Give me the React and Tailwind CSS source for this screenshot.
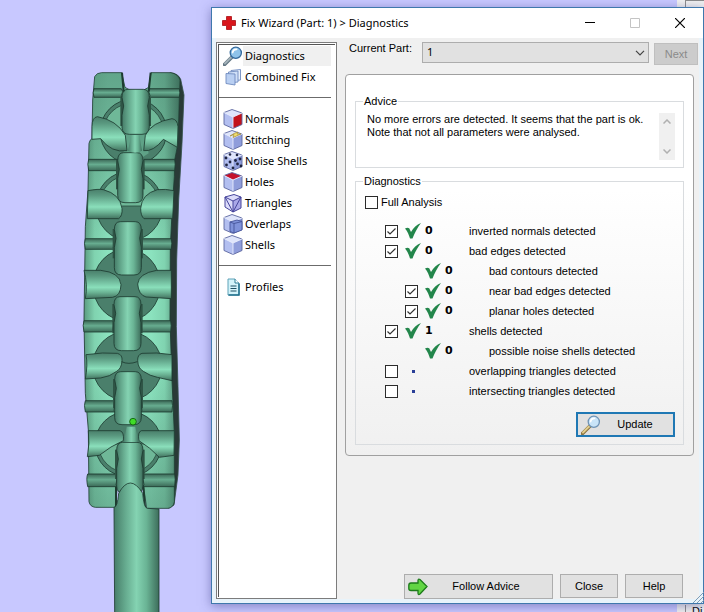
import React, { useState } from "react";

const menuGroups = [
  [
    { name: "Diagnostics", icon: "search" },
    { name: "Combined Fix", icon: "stack" },
  ],
  [
    { name: "Normals", icon: "normals" },
    { name: "Stitching", icon: "stitching" },
    { name: "Noise Shells", icon: "noise" },
    { name: "Holes", icon: "holes" },
    { name: "Triangles", icon: "triangles" },
    { name: "Overlaps", icon: "overlaps" },
    { name: "Shells", icon: "shells" },
  ],
  [{ name: "Profiles", icon: "profiles" }],
];

const checks = [
  { id: "normals", label: "inverted normals detected", count: 0, box: true, on: true },
  { id: "edges", label: "bad edges detected", count: 0, box: true, on: true },
  { id: "contours", label: "bad contours detected", count: 0, nested: true },
  { id: "near", label: "near bad edges detected", count: 0, nested: true, box: true, on: true },
  { id: "planar", label: "planar holes detected", count: 0, nested: true, box: true, on: true },
  { id: "shells", label: "shells detected", count: 1, box: true, on: true },
  { id: "noise", label: "possible noise shells detected", count: 0, nested: true },
  { id: "overlapping", label: "overlapping triangles detected", box: true, on: false },
  { id: "intersecting", label: "intersecting triangles detected", box: true, on: false },
];

const Magnifier = ({ gold }) => (
  <svg viewBox="0 0 20 20" className="size-5 shrink-0" aria-hidden="true">
    <path d="M1.5 18.5 8.5 11.5" stroke={gold ? "#8a7440" : "#5f7380"} strokeWidth="3.6" strokeLinecap="round" />
    <path d="M2 17.5 8 11.5" stroke={gold ? "#e2cd8d" : "#a3b1b9"} strokeWidth="2" strokeLinecap="round" />
    <circle cx="12.8" cy="6.8" r="5.6" fill={gold ? "#c9e4f8" : "#8fc3ea"} stroke={gold ? "#6f93b5" : "#33689b"} strokeWidth="1.3" />
    <path d="M9.6 6.6C9.8 4.6 11.4 3.2 13.6 3.4" stroke="#fff" strokeWidth="1.6" fill="none" strokeLinecap="round" />
  </svg>
);

const Cube = ({ top = "#dfe5fb", right = "#8f9ddb", children }) => (
  <svg viewBox="0 0 20 20" className="size-5 shrink-0" aria-hidden="true">
    <path d="M1 3.5 9 0.5 19 4 10 8Z" fill={top} />
    <path d="M1 3.5 10 8V19.5L1 15.5Z" fill="#b3bff0" />
    <path d="M10 8 19 4V15.5L10 19.5Z" fill={right} />
    <path d="M1 3.5 9 0.5 19 4V15.5L10 19.5 1 15.5Z" fill="none" stroke="#5c679f" strokeWidth="0.9" />
    <path d="M1 3.5 10 8 19 4M10 8V19.5" fill="none" stroke="#e8ecfd" strokeWidth="0.9" />
    {children}
  </svg>
);

const MenuIcon = ({ icon }) => {
  switch (icon) {
    case "search":
      return <Magnifier />;
    case "stack":
      return (
        <svg viewBox="0 0 20 20" className="size-5 shrink-0" aria-hidden="true">
          <g stroke="#6f8bc0" strokeWidth="0.9">
            <path d="M8 3.5 17.500 2.500V13L8 14Z" fill="#e6effc" />
            <path d="M5.500 5 15 4V15L5.500 16Z" fill="#cfdff7" />
            <path d="M3 6.500 12 7V18L3 16.500Z" fill="#b9cff2" />
          </g>
        </svg>
      );
    case "normals":
      return <Cube right="#c2131b" />;
    case "holes":
      return <Cube top="#c4122c" />;
    case "stitching":
      return (
        <Cube>
          <path d="M7 6 11 4.500 10 7.500 18 4 14 4 15 2 11 3.500Z" fill="#f3df6d" stroke="#a08a32" strokeWidth="0.7" />
        </Cube>
      );
    case "noise":
      return (
        <Cube>
          <g fill="#1f2440">
            <circle cx="3" cy="7" r="1.4" />
            <circle cx="7" cy="11" r="1.4" />
            <circle cx="3.5" cy="14" r="1.4" />
            <circle cx="7" cy="3.5" r="1.3" />
            <circle cx="14" cy="4" r="1.3" />
            <circle cx="12.5" cy="9.5" r="1.4" />
            <circle cx="17" cy="8" r="1.4" />
            <circle cx="14.5" cy="13" r="1.4" />
            <circle cx="10" cy="17" r="1.4" />
            <circle cx="18" cy="15" r="1.4" />
          </g>
        </Cube>
      );
    case "triangles":
      return (
        <svg viewBox="0 0 20 20" className="size-5 shrink-0" aria-hidden="true">
          <path d="M2 4 11 1.5 18 4V15L10 19 2 14Z" fill="#dcdcfa" />
          <path d="M10 8 18 4V15L10 19Z" fill="#a9a8e8" />
          <path d="M2 4 11 1.5 18 4V15L10 19 2 14ZM2 4 10 19 18 4M10 19V8M2 4 10 8 18 4" fill="none" stroke="#46459b" />
        </svg>
      );
    case "overlaps":
      return (
        <Cube>
          <path d="M7 8 14 6 19 7.500V16L11 19 7 17.500Z" fill="#7f92da" stroke="#46559b" strokeWidth="0.9" />
          <path d="M7 8 11 9.500 19 7.500M11 9.500V19" fill="none" stroke="#46559b" strokeWidth="0.9" />
        </Cube>
      );
    case "profiles":
      return (
        <svg viewBox="0 0 20 20" className="size-5 shrink-0" aria-hidden="true">
          <path d="M5 2H12L16 6V18H5Z" fill="#d3f3fa" stroke="#5fa3b8" />
          <path d="M12 2V6H16" fill="#fff" stroke="#2c7c95" />
          <path d="M16 6.500V18H5.500" fill="none" stroke="#1f6f8c" strokeWidth="1.500" />
          <path d="M7.500 9H13.500M7.500 11.500H13.500M7.500 14H13.500" stroke="#1e4f63" />
        </svg>
      );
    default:
      return <Cube />;
  }
};

const GreenTick = () => (
  <svg viewBox="0 0 16 16" className="size-4 shrink-0" aria-hidden="true">
    <path d="M0 5.500Q2.500 4 4.200 5.200L6 9C8.500 4.500 11.500 1.500 16 0 12.500 4.500 9.500 10 7.500 15.500H5C4 12 2.500 8.500 0 5.500Z" fill="#23864b" />
  </svg>
);

const CheckBox = ({ id, checked, onChange }) => (
  <span className="grid size-[13px] shrink-0">
    <input
      id={id}
      type="checkbox"
      checked={checked}
      onChange={onChange}
      className="col-start-1 row-start-1 size-[13px] appearance-none border border-[#2b2b2b] bg-white"
    />
    {checked && (
      <svg viewBox="0 0 13 13" className="pointer-events-none col-start-1 row-start-1 size-[13px]" aria-hidden="true">
        <path d="M2.500 6.500 5 9 10.500 3.500" fill="none" stroke="#333" strokeWidth="1.200" />
      </svg>
    )}
  </span>
);

// Outlines of the side rollers, left and right of the centre line
const rollers = [
  "M66 200Q66 172 82 170Q140 180 166 226L171 272Q125 280 92 236L66 238Z",
  "M324 200Q322 178 306 176Q245 186 226 226L221 272Q250 276 280 238L322 262Z",
  "M54 392Q85 386 100 389Q150 402 156 445Q158 468 146 476H52Z",
  "M312 392Q285 386 262 389Q215 402 212 445Q212 468 222 476H308Z",
  "M42 631H92Q150 637 153 674Q152 708 128 712L46 716Q54 675 42 631Z",
  "M304 631H260Q206 640 203 672Q206 705 228 711L304 716Z",
  "M48 884Q100 876 142 880Q158 884 156 902Q155 925 140 934Q120 950 92 954L46 957Q54 915 48 884Z",
  "M306 884Q260 876 216 880Q202 884 203 902Q204 925 220 934Q240 948 262 952L306 962Z",
  "M55 1112H150Q163 1116 160 1142Q122 1158 88 1186L52 1190Q60 1150 55 1112Z",
  "M313 1112H214Q202 1116 207 1142Q240 1162 268 1192L312 1186Z",
];

const ridges = [
  [86, 112, 72, 158, 236, 328],
  [298, 332, 56, 146, 218, 314],
  [536, 568, 46, 134, 212, 304],
  [782, 816, 42, 132, 212, 302],
  [1022, 1056, 46, 136, 212, 306],
  [1242, 1280, 53, 142, 218, 314],
];

// Central posts: [top, bottom, left, right]
const posts = [
  [88, 223, 156, 238],
  [278, 428, 143, 219],
  [485, 645, 133, 214],
  [710, 872, 132, 213],
  [935, 1094, 134, 214],
  [1147, 1300, 140, 219],
];

const discs = [
  { cx: 190, cy: 215, rx: 100, ry: 98, wedge: 0 },
  { cx: 178, cy: 438, rx: 100, ry: 104, wedge: 0 },
  { cx: 170, cy: 675, rx: 101, ry: 108 },
  { cx: 172, cy: 918, rx: 104, ry: 104 },
  { cx: 175, cy: 1152, rx: 100, ry: 98, wedge: 1 },
];

const faceOutline =
  "M74 50Q80 38 95 38H155L165 82Q200 108 236 82L243 38H302Q325 42 330 60L328 110 324 250 314 300 313 350 308 420 301 560 300 780 306 960 313 1120 313 1325Q310 1343 294 1345H230L220 1275H142L137 1342H76Q60 1340 57 1325L55 1110 46 1000 42 780 46 500 54 390 57 250Q60 238 66 236L68 120Z";

const PartModel = () => (
  <svg viewBox="0 0 211 612" preserveAspectRatio="xMinYMin slice" className="h-full w-[211px]" role="img" aria-label="3D part">
    <defs>
      <linearGradient id="roller" x1="0" y1="0" x2="0" y2="1">
        <stop offset="0" stopColor="#4a7f6b" />
        <stop offset="0.200" stopColor="#5a9980" />
        <stop offset="0.600" stopColor="#8adfbb" />
        <stop offset="0.780" stopColor="#6bb394" />
        <stop offset="1" stopColor="#42725f" />
      </linearGradient>
      <linearGradient id="post">
        <stop offset="0" stopColor="#467c68" />
        <stop offset="0.250" stopColor="#65aa8e" />
        <stop offset="0.500" stopColor="#84d3b2" />
        <stop offset="0.720" stopColor="#6ab495" />
        <stop offset="1" stopColor="#3d6d5b" />
      </linearGradient>
      <linearGradient id="face">
        <stop offset="0" stopColor="#5b9b81" />
        <stop offset="0.110" stopColor="#80d3b0" />
        <stop offset="0.250" stopColor="#8be2be" />
        <stop offset="0.700" stopColor="#8be2be" />
        <stop offset="0.840" stopColor="#80d3b0" />
        <stop offset="1" stopColor="#4b806c" />
      </linearGradient>
      <linearGradient id="ridge" x1="0" y1="0" x2="0" y2="1">
        <stop offset="0" stopColor="#3b6756" />
        <stop offset="0.450" stopColor="#67ad90" />
        <stop offset="1" stopColor="#3b6957" />
      </linearGradient>
      <linearGradient id="ends" x1="0" y1="0" x2="0" y2="1">
        <stop offset="0" stopColor="#2f5c4b" stopOpacity="0.450" />
        <stop offset="0.200" stopColor="#2f5c4b" stopOpacity="0.280" />
        <stop offset="0.400" stopColor="#2f5c4b" stopOpacity="0" />
        <stop offset="0.700" stopColor="#2f5c4b" stopOpacity="0" />
        <stop offset="1" stopColor="#2f5c4b" stopOpacity="0.350" />
      </linearGradient>
    </defs>
    <g transform="translate(70 60) scale(0.33333)" stroke="#1d3b30" strokeWidth="2.500" strokeLinejoin="round">
      <path d="M300 38Q325 40 332 58L342 105 336 250 326 420 320 600 319 800 324 980 328 1140 324 1245 312 1335 296 1345Z" fill="#293a37" stroke="#35504a" />
      <path d={faceOutline} fill="url(#face)" />
      <path d={faceOutline} fill="url(#ends)" stroke="none" />
      {discs.map(({ cx, cy, rx, ry, wedge }) => (
        <g key={cy}>
          <ellipse cx={cx} cy={cy} rx={rx} ry={ry} fill="#4a7f6b" />
          {wedge !== undefined && (
            <path d={`M${cx - rx + 10} ${cy}A${rx - 10} ${ry - 12} 0 0 ${wedge ? 0 : 1} ${cx + rx - 10} ${cy}Z`} fill="#6fb898" strokeWidth="2" />
          )}
        </g>
      ))}
      <path d="M168 212H224L236 280 205 300 160 285Z" fill="#5fa287" stroke="none" />
      {ridges.map(([t, b, l, il, ir, r]) => (
        <g key={t} fill="url(#ridge)">
          <path d={`M${l} ${t}H${il - 4}L${il} ${t + 8} ${il - 4} ${b - 5} ${il} ${b}H${l}Q${l - 5} ${t + 12} ${l} ${t}Z`} />
          <path d={`M${r} ${t}H${ir + 4}L${ir} ${t + 8} ${ir + 4} ${b - 5} ${ir} ${b}H${r}Q${r + 3} ${t + 12} ${r} ${t}Z`} />
        </g>
      ))}
      {/* Shadow gaps on both sides of every post */}
      {posts.map(([t, b, l, r]) => (
        <path key={t} d={`M${l - 5} ${t + 22}H${r + 5}V${t + 110}H${l - 5}Z`} fill="#2f5546" stroke="none" />
      ))}
      {posts.map(([t, b, l, r]) => (
        <path
          key={t}
          d={`M${l + 18} ${t}H${r - 18}Q${r} ${t} ${r} ${t + 24}L${r - 5} ${t + 50} ${r} ${t + 78}V${b - 22}Q${r} ${b} ${r - 22} ${b}H${l + 22}Q${l} ${b} ${l} ${b - 22}V${t + 78}L${l + 5} ${t + 50} ${l} ${t + 24}Q${l} ${t} ${l + 18} ${t}Z`}
          fill="url(#post)"
        />
      ))}
      {rollers.map((d) => (
        <path key={d} d={d} fill="url(#roller)" />
      ))}
      <path d="M184 225H208L216 272Q196 284 174 272Z" fill="url(#post)" stroke="none" />
      <path d="M170 1100H196L206 1146H161Z" fill="url(#post)" stroke="none" />
      <path d="M155 905Q175 915 202 905" fill="none" />
      <path d="M156 38 161 95M242 38 236 95M138 1280V1342M220 1280 225 1342" strokeWidth="6" />
      <path d="M132 1342Q142 1342 146 1300Q180 1238 218 1300Q222 1345 232 1345L267 1347V1660H134Z" fill="url(#post)" />
      <circle cx="189" cy="1085" r="10" fill="#3fdc28" stroke="#0c5a0c" />
    </g>
  </svg>
);

const WizardButton = ({ className, children, ...rest }) => (
  <button
    type="button"
    className={`flex items-center justify-center bg-[#e1e1e1] text-black ${className}`}
    {...rest}
  >
    {children}
  </button>
);

const TitleBar = () => (
  <header className="flex h-[30px] items-center bg-white pl-[9px]">
    <svg viewBox="0 0 16 16" className="size-4" aria-hidden="true">
      <path d="M5.500 1.500H10.500V5.500H14.500V10.500H10.500V14.500H5.500V10.500H1.500V5.500H5.500Z" fill="#d9151b" stroke="#a90f14" strokeWidth="0.800" strokeLinejoin="round" />
    </svg>
    <h1 className="ml-1 flex-1 font-['Noto_Sans',sans-serif] text-black">Fix Wizard (Part: 1) &gt; Diagnostics</h1>
    <div className="flex">
      <button type="button" aria-label="Minimize" className="flex h-[30px] w-[45px] items-center justify-center">
        <svg viewBox="0 0 10 10" className="size-[10px]">
          <path d="M0 4.500H10" stroke="#000" />
        </svg>
      </button>
      <button type="button" aria-label="Maximize" disabled className="flex h-[30px] w-[45px] items-center justify-center">
        <svg viewBox="0 0 10 10" className="size-[10px]">
          <path d="M0.500 0.500H9.500V9.500H0.500Z" fill="none" stroke="#c4c4c4" />
        </svg>
      </button>
      <button type="button" aria-label="Close window" className="flex h-[30px] w-[46px] items-center justify-center">
        <svg viewBox="0 0 10 10" className="size-[10px]">
          <path d="M0 0 10 10M10 0 0 10" stroke="#000" strokeWidth="1.200" />
        </svg>
      </button>
    </div>
  </header>
);

const SideMenu = ({ active, onSelect }) => (
  <nav className="w-[121px] shrink-0 border border-[#7c7c7c] bg-white p-px">
    <div className="h-full border-t border-l border-[#555] pr-1">
      {menuGroups.map((group, i) => (
        <React.Fragment key={i}>
          {i > 0 && (
            <div className="flex h-[21px] items-center">
              <hr className="w-full border-[#6b6b6b]" />
            </div>
          )}
          {group.map((item) => (
            <button
              key={item.name}
              type="button"
              onClick={() => onSelect(item.name)}
              className="flex h-[21px] w-full items-center pl-1 text-left font-['Noto_Sans',sans-serif] text-black"
            >
              <MenuIcon icon={item.icon} />
              <span className={`flex-1 pl-[2px] leading-5 whitespace-nowrap ${active === item.name ? "bg-[#f0f0f0]" : ""}`}>
                {item.name}
              </span>
            </button>
          ))}
        </React.Fragment>
      ))}
    </div>
  </nav>
);

const App = () => {
  const [active, setActive] = useState("Diagnostics");
  const [full, setFull] = useState(false);
  const [enabled, setEnabled] = useState(() => Object.fromEntries(checks.map((c) => [c.id, !!c.on])));

  const toggle = (id) => setEnabled((prev) => ({ ...prev, [id]: !prev[id] }));

  return (
    <div className="grid min-h-screen overflow-hidden bg-[#c8c8ff] font-['Liberation_Sans',sans-serif] text-[11px] text-black">
      {/* Workspace behind the wizard */}
      <div className="col-start-1 row-start-1 flex justify-between">
        <PartModel />
        <div className="flex w-[27px] flex-col justify-between bg-[#f0f0f0] pl-2">
          <div className="h-5 border-t border-l border-[#8c8c8c]" />
          <div className="h-[7px] border-l border-[#8c8c8c] pl-[6px] leading-3">Di</div>
        </div>
      </div>

      {/* Wizard window */}
      <section className="col-start-1 row-start-1 mt-[7px] mb-2 ml-[211px] flex flex-col border border-[#3f78ad] bg-[#f0f0f0] shadow-[0_2px_10px_rgba(60,60,130,0.5)]">
        <TitleBar />
        <div className="flex flex-1 border-x-4 border-b-4 border-[#e8f3fa] pt-1">
          <SideMenu active={active} onSelect={setActive} />

          <main className="flex min-w-0 flex-1 flex-col pr-px pl-2">
            <div className="flex items-start pl-1">
              <label htmlFor="part" className="w-[73px] shrink-0 leading-3">
                Current Part:
              </label>
              <div className="grid flex-1">
                <select id="part" className="col-start-1 row-start-1 h-[21px] appearance-none border border-[#adadad] bg-[#e1e1e1] pl-1 font-['Noto_Sans',sans-serif]">
                  <option>1</option>
                </select>
                <svg viewBox="0 0 10 6" className="pointer-events-none col-start-1 row-start-1 mr-1 h-[6px] w-[10px] self-center justify-self-end" aria-hidden="true">
                  <path d="M1 0.800 5 4.800 9 0.800" fill="none" stroke="#444" strokeWidth="1.200" />
                </svg>
              </div>
              <button
                type="button"
                disabled
                className="mt-px ml-[5px] h-[22px] w-11 border border-[#bfbfbf] bg-[#cccccc] text-[#8a8a8a]"
              >
                Next
              </button>
            </div>

            <div className="mt-[9px] mr-1 rounded-[4px] border border-[#a0a0a0] bg-linear-to-b from-white from-30% to-[#f0f0f0] px-[9px] pt-[18px] pb-[10px]">
              <fieldset className="border border-[#d9dcdf] pr-2 pb-[7px] pl-[7px]">
                <legend className="px-px leading-4">Advice</legend>
                <div className="flex pl-1">
                  <p className="flex-1 pt-1 leading-[13px]">
                    No more errors are detected. It seems that the part is ok.
                    <br />
                    Note that not all parameters were analysed.
                  </p>
                  <div className="mt-1 flex h-[47px] w-4 shrink-0 flex-col items-center justify-between bg-[#f0f0f0] py-[6px]">
                    <svg viewBox="0 0 8 5" className="h-[5px] w-2" aria-hidden="true">
                      <path d="M0.500 4.500 4 1 7.500 4.500" fill="none" stroke="#b0b0b0" strokeWidth="1.500" />
                    </svg>
                    <svg viewBox="0 0 8 5" className="h-[5px] w-2" aria-hidden="true">
                      <path d="M0.500 0.500 4 4 7.500 0.500" fill="none" stroke="#b0b0b0" strokeWidth="1.500" />
                    </svg>
                  </div>
                </div>
              </fieldset>

              <fieldset className="mt-[5px] border border-[#d9dcdf] pr-2 pb-[7px] pl-[9px]">
                <legend className="-ml-[2px] px-px leading-4">Diagnostics</legend>
                <div className="flex h-[26px] items-center gap-[3px]">
                  <CheckBox id="full" checked={full} onChange={() => setFull(!full)} />
                  <label htmlFor="full">Full Analysis</label>
                </div>

                <ul className="mt-[6px] pl-5">
                  {checks.map((check) => (
                    <li key={check.id} className={`flex h-5 items-center ${check.nested ? "pl-5" : ""}`}>
                      {check.box ? (
                        <CheckBox id={check.id} checked={enabled[check.id]} onChange={() => toggle(check.id)} />
                      ) : (
                        <span className="w-[13px]" />
                      )}
                      <span className="ml-[7px] flex w-4 justify-center">
                        {check.count === undefined ? <span className="size-[3px] bg-[#2a3f97]" /> : <GreenTick />}
                      </span>
                      <b className="ml-1 w-11 font-['DejaVu_Sans',sans-serif]">{check.count}</b>
                      <label htmlFor={check.box ? check.id : undefined} className="whitespace-nowrap">
                        {check.label}
                      </label>
                    </li>
                  ))}
                </ul>

                <div className="mt-[11px] flex justify-end">
                  <WizardButton className="h-[25px] w-[99px] border-2 border-[#1f78b4] pl-[3px]">
                    <Magnifier gold />
                    <span className="flex-1 pr-1 text-center">Update</span>
                  </WizardButton>
                </div>
              </fieldset>
            </div>

            <footer className="mt-auto flex items-start justify-end gap-[7px] pr-[15px]">
              <WizardButton className="h-[25px] w-[149px] border border-[#adadad] pl-[3px]">
                <svg viewBox="0 0 20 18" className="h-[18px] w-5" aria-hidden="true">
                  <path d="M3 5H10V2.500Q10 0.500 12 1.500L19 8.500 12 16Q10 17.500 10 15V12.500H3Q0.800 12.500 0.800 10.500V7.500Q0.800 5 3 5Z" fill="#62d544" stroke="#1c7a1a" strokeWidth="1.300" />
                </svg>
                <span className="flex-1 pr-2 text-center">Follow Advice</span>
              </WizardButton>
              <WizardButton className="h-6 w-[58px] border border-[#adadad]">Close</WizardButton>
              <WizardButton className="h-6 w-[58px] border border-[#adadad]">Help</WizardButton>
            </footer>
          </main>
        </div>
      </section>

      <svg viewBox="0 0 12 12" className="col-start-1 row-start-1 mb-[9px] size-3 self-end justify-self-end" aria-hidden="true">
        <path d="M1 12 12 1M5 12 12 5M9 12 12 9" stroke="#7c9cb8" />
      </svg>
    </div>
  );
};

export default App;
